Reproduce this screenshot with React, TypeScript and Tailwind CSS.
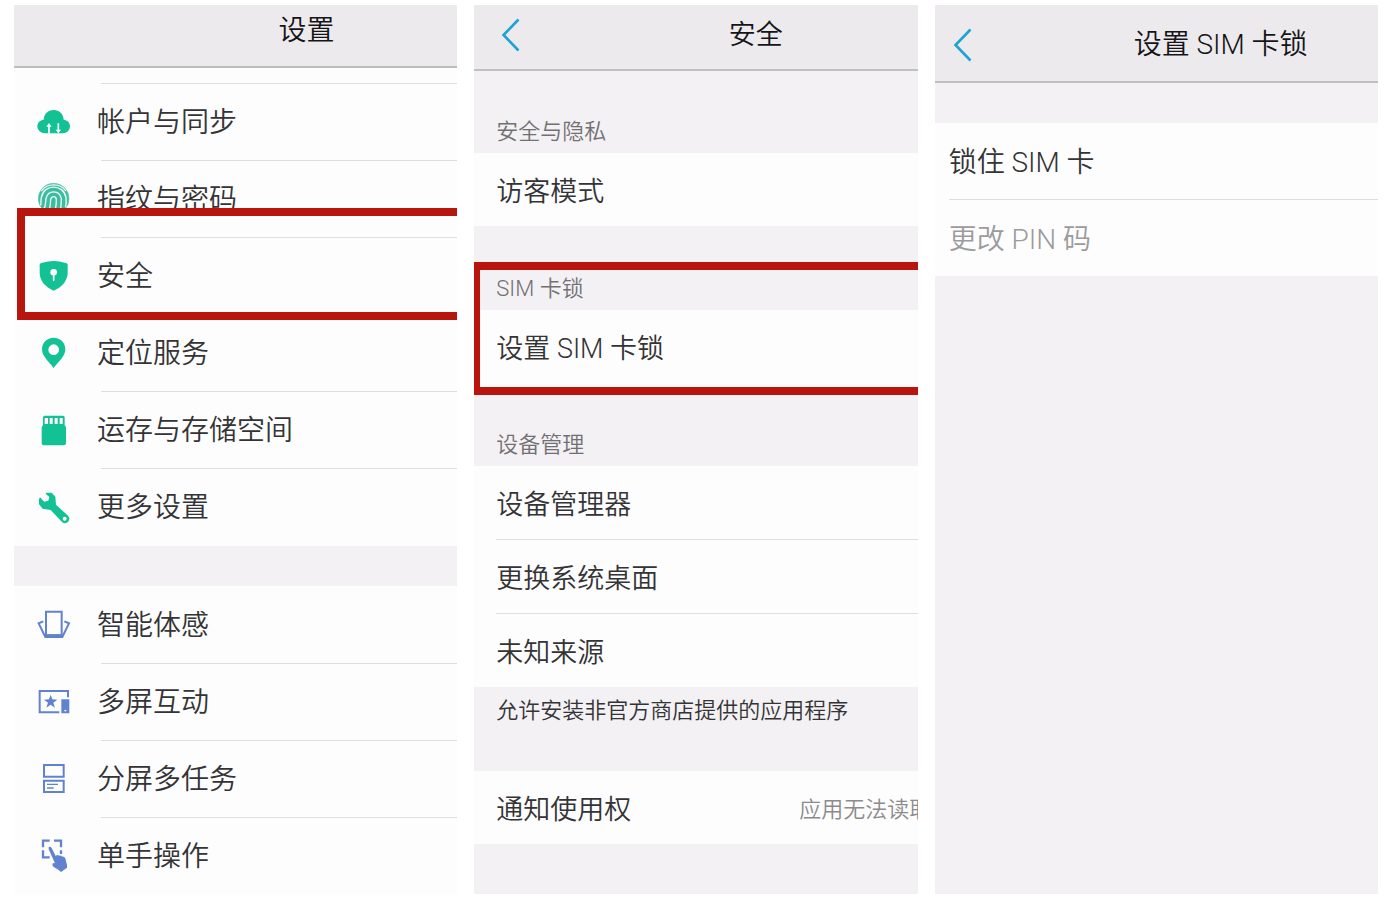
import type { ReactNode } from "react";

const GREEN = "#12c295";
const BLUE = "#6182cf";

function Icon({ viewBox, children }: { viewBox: string; children: ReactNode }) {
  return (
    <svg viewBox={viewBox} className="size-9 shrink-0" fill="none" aria-hidden="true">
      {children}
    </svg>
  );
}

const CloudIcon = (
  <Icon viewBox="66 42 108 108">
    <path
      fill={GREEN}
      d="M94 130C80 130 70 120 70 109C70 98 78 90 89 89C90 72 102 60 119 60C136 60 148 72 149 89C160 90 168 98 168 109C168 120 159 130 146 130Z"
    />
    <path stroke="#fdfdfd" strokeWidth="5" d="M105 131V106M133 100V124" />
    <path fill="#fdfdfd" d="M105 99L113 110H97ZM133 130L125 119H141Z" />
  </Icon>
);

const FingerprintIcon = (
  <Icon viewBox="66 273 108 108">
    <circle cx="119" cy="326" r="46" fill="#3dbd9f" stroke="#5fc7b0" strokeWidth="2" />
    <g stroke="#f2fcf9" strokeWidth="4" strokeLinecap="round">
      <path d="M83 302C101 279 137 279 155 302" />
      <path d="M80 345C82 338 80 330 82 322C90 281 148 281 156 322C157 334 157 342 155 350" />
      <path d="M88 359C97 347 94 338 96 326C102 299 136 299 142 326C142 342 141 352 138 364" />
      <path d="M102 368C112 352 108 340 110 328C113 317 125 317 127 328C127 344 126 356 121 370" />
    </g>
  </Icon>
);

const ShieldIcon = (
  <Icon viewBox="66 54 108 108">
    <path
      fill={GREEN}
      d="M119 63C133 63 147 66 158 70Q161 72 161 76V98C161 123 142 142 119 152C96 142 77 123 77 98V76Q77 72 80 70C91 66 105 63 119 63Z"
    />
    <circle cx="119" cy="97" r="10" fill="#fdfdfd" />
    <path stroke="#fdfdfd" strokeWidth="5" strokeLinecap="round" d="M119 100V121" />
  </Icon>
);

const PinIcon = (
  <Icon viewBox="66 285 108 108">
    <path
      fill={GREEN}
      fillRule="evenodd"
      d="M119 293C99 293 84 308 84 328C84 349 104 365 119 384C134 365 154 349 154 328C154 308 139 293 119 293ZM119 313A16 16 0 1 1 119 345A16 16 0 1 1 119 313Z"
    />
  </Icon>
);

const StorageIcon = (
  <Icon viewBox="66 36 108 108">
    <path
      fill={GREEN}
      fillRule="evenodd"
      d="M92 47H147Q152 47 152 52V75L156 82V130Q156 136 150 136H89Q83 136 83 130V82L87 75V52Q87 47 92 47ZM92 54V72H102V54ZM107 54V72H116V54ZM122 54V72H131V54ZM137 54V72H146V54Z"
    />
  </Icon>
);

const WrenchIcon = (
  <Icon viewBox="66 267 108 108">
    <path
      fill={GREEN}
      fillRule="evenodd"
      d="M97 278H113L124 290L126 314L162 347A13 13 0 0 1 144 366L110 330L86 326L75 313V298L78 292L91 305L103 302L106 291L95 281ZM152 350A6 6 0 1 0 152 362A6 6 0 1 0 152 350Z"
    />
  </Icon>
);

const MotionIcon = (
  <Icon viewBox="66 51 108 108">
    <g stroke={BLUE} strokeWidth="6">
      <path d="M96 65H143V136H96Z" />
      <path d="M88 94L74 100L94 141H145L165 100L151 94" />
    </g>
    <path stroke={BLUE} strokeWidth="10" d="M94 138H145" />
  </Icon>
);

const ScreenShareIcon = (
  <Icon viewBox="66 282 108 108">
    <path stroke={BLUE} strokeWidth="6" d="M136 367H77V303H162V322" />
    <path
      fill={BLUE}
      d="M110 314L115 328L130 329L118 338L123 353L110 344L97 353L102 338L90 329L105 328Z"
    />
    <path fill={BLUE} fillRule="evenodd" d="M142 328H166V370H142ZM151 360V364H157V360Z" />
  </Icon>
);

const SplitScreenIcon = (
  <Icon viewBox="66 33 108 108">
    <g stroke={BLUE} strokeWidth="6">
      <path d="M90 45H149V80H90Z" />
      <path d="M90 92H149V126H90Z" />
      <path strokeWidth="4" d="M99 103H132M99 114H119" />
    </g>
  </Icon>
);

const OneHandIcon = (
  <Icon viewBox="66 264 108 108">
    <path
      stroke={BLUE}
      strokeWidth="7"
      d="M87 292V272H107M120 272H141V292M87 301V322H107M141 301V312"
    />
    <path
      fill={BLUE}
      d="M104 291Q109 288 113 294L125 318Q130 313 136 317Q141 315 145 320Q151 319 154 325L159 346V353L141 366L134 360L118 350Q112 342 119 339L123 340L104 298Z"
    />
  </Icon>
);

type Item = { label: string; icon: ReactNode };

const deviceItems: Item[] = [
  { label: "帐户与同步", icon: CloudIcon },
  { label: "指纹与密码", icon: FingerprintIcon },
  { label: "安全", icon: ShieldIcon },
  { label: "定位服务", icon: PinIcon },
  { label: "运存与存储空间", icon: StorageIcon },
  { label: "更多设置", icon: WrenchIcon },
];

const smartItems: Item[] = [
  { label: "智能体感", icon: MotionIcon },
  { label: "多屏互动", icon: ScreenShareIcon },
  { label: "分屏多任务", icon: SplitScreenIcon },
  { label: "单手操作", icon: OneHandIcon },
];

function IconList({ items, topLine }: { items: Item[]; topLine: boolean }) {
  return (
    <ul className="bg-[#fdfdfd]">
      {items.map((item, i) => (
        <li key={item.label}>
          <div className={i > 0 || topLine ? "ml-[87px] h-px bg-[#dedede]" : "h-px"} />
          <button
            type="button"
            className="flex h-[76px] w-full items-center gap-[25px] pl-[22px] text-left text-[28px] leading-9 whitespace-nowrap"
          >
            {item.icon}
            <span className="pt-0.5">{item.label}</span>
          </button>
        </li>
      ))}
    </ul>
  );
}

function BackButton() {
  return (
    <button type="button" aria-label="返回" className="text-[#1ba3d6]">
      <svg viewBox="0 0 20 34" className="h-[34px] w-5" fill="none" aria-hidden="true">
        <path d="M17.5 1.5L2.5 17L17.5 32.5" stroke="currentColor" strokeWidth="2.6" />
      </svg>
    </button>
  );
}

function SectionLabel({ children }: { children: ReactNode }) {
  return <h2 className="px-[22px] pt-px pb-[5px] text-[22px] leading-8 text-[#717073]">{children}</h2>;
}

function Row({ label, value }: { label: string; value?: string }) {
  return (
    <button
      type="button"
      className="flex h-[73px] w-[127%] items-center justify-between bg-[#fdfdfd] pt-1 pr-[106px] pl-[22px] text-left text-[27px] leading-9 whitespace-nowrap"
    >
      <span>{label}</span>
      {value && <span className="text-[22px] text-[#8b8b8d]">{value}</span>}
    </button>
  );
}

function Divider() {
  return (
    <div className="bg-[#fdfdfd] pl-[22px]">
      <div className="h-px bg-[#dedede]" />
    </div>
  );
}

export default function App() {
  return (
    <main className="grid min-h-screen grid-cols-3 gap-[17px] bg-white pt-[5px] pr-[9px] pb-2 pl-3.5 font-['Roboto','Noto_Sans_CJK_SC',sans-serif] font-[350] text-[#343436]">
      <section className="relative overflow-hidden bg-[#f3f1f4]">
        <header className="border-b-2 border-[#bdbcbe] bg-[#eceaed]">
          <div className="flex h-[61px] w-[132%] justify-center pt-2">
            <h1 className="text-[28px] leading-9 text-[#151517]">设置</h1>
          </div>
        </header>
        <div className="h-[15px] bg-[#fdfdfd]" />
        <IconList items={deviceItems} topLine />
        <div className="h-px bg-[#fdfdfd]" />
        <div className="h-10" />
        <IconList items={smartItems} topLine={false} />
        <div className="pointer-events-none absolute top-[203px] right-0 left-[3px] h-28 border-y-8 border-l-8 border-[#b9150e]" />
      </section>

      <section className="overflow-hidden bg-[#f3f1f4]">
        <header className="border-b-2 border-[#c0bfc2] bg-[#eceaed]">
          <div className="grid h-16 w-[127%] grid-cols-[1fr_auto_1fr] items-center px-[27px] pb-1">
            <BackButton />
            <h1 className="text-[27px] leading-9 text-[#151517]">安全</h1>
          </div>
        </header>
        <div className="h-11" />
        <SectionLabel>安全与隐私</SectionLabel>
        <Row label="访客模式" />
        <div className="h-9" />
        <div className="relative overflow-hidden pt-2.5">
          <SectionLabel>SIM 卡锁</SectionLabel>
          <Row label="设置 SIM 卡锁" />
          <div className="h-3 bg-[#fdfdfd]" />
          <div className="pointer-events-none absolute inset-0 border-y-8 border-l-6 border-[#b9150e]" />
        </div>
        <div className="h-[33px]" />
        <SectionLabel>设备管理</SectionLabel>
        <Row label="设备管理器" />
        <Divider />
        <Row label="更换系统桌面" />
        <Divider />
        <Row label="未知来源" />
        <p className="px-[22px] pt-2 pb-11 text-[22px] leading-8 whitespace-nowrap">
          允许安装非官方商店提供的应用程序
        </p>
        <Row label="通知使用权" value="应用无法读取" />
      </section>

      <section className="overflow-hidden bg-[#f3f1f4]">
        <header className="border-b-2 border-[#c0bfc2] bg-[#eceaed]">
          <div className="grid h-[76px] w-[129%] grid-cols-[1fr_auto_1fr] items-center px-[18px] pt-1">
            <BackButton />
            <h1 className="text-[28px] leading-9 text-[#151517]">设置 SIM 卡锁</h1>
          </div>
        </header>
        <div className="h-10" />
        <div className="bg-[#fdfdfd] pl-3.5 text-[28px] leading-9">
          <button type="button" className="flex h-[76px] w-full items-center pt-1 text-left">
            锁住 SIM 卡
          </button>
          <div className="h-px bg-[#dedede]" />
          <button
            type="button"
            disabled
            className="flex h-[76px] w-full items-center pt-1 text-left text-[#9b9b9d]"
          >
            更改 PIN 码
          </button>
        </div>
      </section>
    </main>
  );
}
